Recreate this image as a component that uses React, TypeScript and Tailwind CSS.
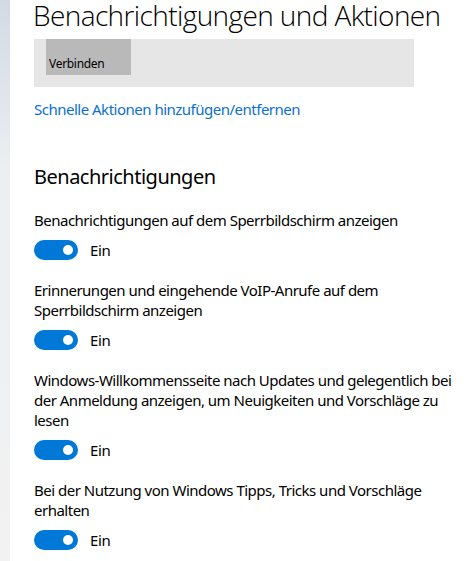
import React from "react";

function Toggle() {
  return (
    <div className="flex items-center gap-3">
      <div className="w-[44px] h-[20px] rounded-full bg-[#0078d7] flex items-center justify-end pr-[5px]">
        <div className="w-[10px] h-[10px] rounded-full bg-white" />
      </div>
      <span className="text-[15px] leading-[20px] text-black tracking-[-0.4px]">Ein</span>
    </div>
  );
}

function Setting({ lines }: { lines: string[] }) {
  return (
    <div className="flex flex-col shrink-0">
      <div className="text-[15px] leading-[20px] text-black tracking-[-0.5px] whitespace-nowrap">
        {lines.map((l, i) => (
          <div key={i}>{l}</div>
        ))}
      </div>
      <div className="mt-[10px]">
        <Toggle />
      </div>
    </div>
  );
}

export default function App() {
  return (
    <div
      className="flex w-[464px] h-[561px] overflow-hidden bg-white"
      style={{ fontFamily: '"Noto Sans", "Open Sans", sans-serif' }}
    >
      <div className="w-[10px] shrink-0 bg-gradient-to-b from-[#d2dae4] via-[#eceef1] via-30% to-[#f2f2f2]" />
      <div className="flex flex-col pl-[23px] pr-2">
        <h1
          className="shrink-0 text-[28px] font-light leading-[30px] text-black whitespace-nowrap tracking-[-0.6px]"
          style={{ fontFamily: '"Open Sans", "Noto Sans", sans-serif' }}
        >
          Benachrichtigungen und Aktionen
        </h1>
        <div className="shrink-0 mt-[9px] ml-[1px] w-[380px] h-[48px] bg-[#e6e6e6] pl-[12px]">
          <div className="w-[85px] h-[36px] bg-[#b9b9b9] flex items-end pl-[3px] pb-[3px]">
            <span className="text-[12px] leading-[16px] text-black tracking-[-0.3px]">Verbinden</span>
          </div>
        </div>
        <a className="shrink-0 mt-[12px] ml-[1px] text-[15px] leading-[20px] text-[#0a70d0] tracking-[-0.5px]">
          Schnelle Aktionen hinzufügen/entfernen
        </a>
        <h2 className="shrink-0 mt-[44px] ml-[1px] text-[20px] leading-[28px] text-black tracking-[-0.5px]">
          Benachrichtigungen
        </h2>
        <div className="shrink-0 mt-[19px] ml-[1px] flex flex-col gap-[20px]">
          <Setting lines={["Benachrichtigungen auf dem Sperrbildschirm anzeigen"]} />
          <Setting lines={["Erinnerungen und eingehende VoIP-Anrufe auf dem", "Sperrbildschirm anzeigen"]} />
          <Setting
            lines={[
              "Windows-Willkommensseite nach Updates und gelegentlich bei",
              "der Anmeldung anzeigen, um Neuigkeiten und Vorschläge zu",
              "lesen",
            ]}
          />
          <Setting lines={["Bei der Nutzung von Windows Tipps, Tricks und Vorschläge", "erhalten"]} />
        </div>
      </div>
    </div>
  );
}
